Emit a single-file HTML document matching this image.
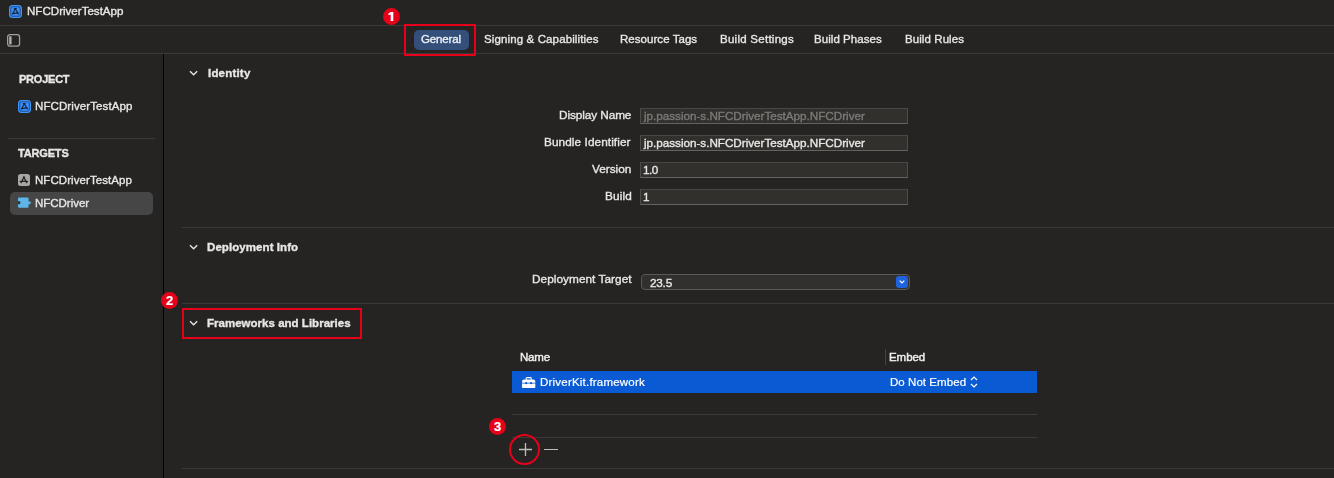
<!DOCTYPE html>
<html><head><meta charset="utf-8">
<style>
*{margin:0;padding:0;box-sizing:border-box}
html,body{width:1334px;height:478px;overflow:hidden;background:#252422}
body{position:relative;font-family:"Liberation Sans",sans-serif;color:#dedddc}
.a{position:absolute;white-space:nowrap;line-height:1;-webkit-text-stroke:0.35px currentColor;will-change:transform}
.hl{position:absolute;height:1px;background:#3b3a38}
.badge{position:absolute;width:17px;height:17px;border-radius:50%;background:#e6001a;color:#fff;font-weight:bold;font-size:13px;line-height:17px;text-align:center;-webkit-text-stroke:0.2px #fff}
.redbox{position:absolute;border:2px solid #e6001a}
.field{position:absolute;left:640px;width:268px;height:16px;background:#31302d;border:1px solid #4d4c49;border-top-color:#484744;border-bottom-color:#64635f}
</style></head><body>
<svg class="a" style="left:9px;top:5px" width="13" height="13" viewBox="0 0 13 13"><rect x="0.5" y="0.5" width="12" height="12" rx="2.6" fill="#3a8ef4" stroke="#4196fa" stroke-width="1"/>
<rect x="1.75" y="1.75" width="9.5" height="9.5" rx="1.3" fill="none" stroke="#184a90" stroke-width="0.9"/>
<path d="M5.3 3.6 L7.3 3.6 M6.3 3.7 L3.5 9.1 M6.3 3.7 L9.3 9.1 M3.4 8.6 L9.2 7.9" stroke="#17253b" stroke-width="1.1" fill="none" stroke-linecap="round"/></svg>
<div class="hl" style="left:0;top:25px;width:1334px"></div>
<svg class="a" style="left:7px;top:34px" width="14" height="13" viewBox="0 0 14 13">
<rect x="0.65" y="0.65" width="11.9" height="11.5" rx="2.3" fill="none" stroke="#a09f9e" stroke-width="1.3"/>
<rect x="2.2" y="2.2" width="2.4" height="8.4" rx="0.7" fill="#b0afae"/></svg>
<div class="a" style="left:414px;top:30px;width:55px;height:20px;border-radius:5px;background:#34507a"></div>
<div class="hl" style="left:0;top:53px;width:1334px"></div>
<div class="a" style="left:163px;top:54px;width:1px;height:424px;background:#000"></div>
<svg class="a" style="left:18px;top:100px" width="13" height="13" viewBox="0 0 13 13"><rect x="0.5" y="0.5" width="12" height="12" rx="2.6" fill="#3a8ef4" stroke="#4196fa" stroke-width="1"/>
<rect x="1.75" y="1.75" width="9.5" height="9.5" rx="1.3" fill="none" stroke="#184a90" stroke-width="0.9"/>
<path d="M5.3 3.6 L7.3 3.6 M6.3 3.7 L3.5 9.1 M6.3 3.7 L9.3 9.1 M3.4 8.6 L9.2 7.9" stroke="#17253b" stroke-width="1.1" fill="none" stroke-linecap="round"/></svg>
<div class="hl" style="left:8px;top:138px;width:147px"></div>
<svg class="a" style="left:18px;top:174px" width="12" height="12" viewBox="0 0 12 12">
<rect x="0" y="0" width="12" height="12" rx="2.5" fill="#a7a6a5"/>
<path d="M5.9 3.2 L3.1 8.6 M5.9 3.2 L8.7 8.6 M2.3 7.4 L9.5 7.4" stroke="#262524" stroke-width="1.3" fill="none" stroke-linecap="round"/><circle cx="5.9" cy="3.2" r="0.9" fill="#262524"/></svg>
<div class="a" style="left:10px;top:192px;width:143px;height:23px;border-radius:5px;background:#464646"></div>
<svg class="a" style="left:18px;top:197px" width="13" height="12" viewBox="0 0 13 12">
<rect x="0" y="0.6" width="10.6" height="10.2" rx="1" fill="#5db5e8"/>
<circle cx="11.3" cy="5.7" r="1.5" fill="#5db5e8"/>
<circle cx="0.9" cy="5.7" r="1.6" fill="#343638"/></svg>
<svg class="a" style="left:189px;top:70px" width="10" height="7" viewBox="0 0 10 7"><path d="M1 1.2 L4.6 4.8 L8.2 1.2" stroke="#e6e5e4" stroke-width="1.4" fill="none"/></svg>
<div class="field" style="top:108px"></div>
<div class="field" style="top:135px"></div>
<div class="field" style="top:162px"></div>
<div class="field" style="top:189px"></div>
<div class="hl" style="left:182px;top:227px;width:1152px"></div>
<svg class="a" style="left:189px;top:244px" width="10" height="7" viewBox="0 0 10 7"><path d="M1 1.2 L4.6 4.8 L8.2 1.2" stroke="#e6e5e4" stroke-width="1.4" fill="none"/></svg>
<div class="a" style="left:641px;top:274px;width:269px;height:16px;border-radius:4px;background:#32302e;border:1px solid #5a5957"></div>
<div class="a" style="left:896px;top:276px;width:12px;height:12px;border-radius:3px;background:#1d63dd"></div>
<svg class="a" style="left:899px;top:280px" width="6" height="4" viewBox="0 0 6 4"><path d="M0.7 0.7 L3 3 L5.3 0.7" stroke="#fff" stroke-width="1.2" fill="none"/></svg>
<div class="hl" style="left:182px;top:303px;width:1152px"></div>
<svg class="a" style="left:189px;top:320px" width="10" height="7" viewBox="0 0 10 7"><path d="M1 1.2 L4.6 4.8 L8.2 1.2" stroke="#e6e5e4" stroke-width="1.4" fill="none"/></svg>
<div class="a" style="left:885px;top:349px;width:1px;height:16px;background:#444341"></div>
<div class="a" style="left:512px;top:371px;width:525px;height:22px;background:#0a5ad4"></div>
<svg class="a" style="left:522px;top:377px" width="14" height="12" viewBox="0 0 14 12">
<path d="M4.2 2.8 L4.2 1.3 Q4.2 0.6 4.9 0.6 L8.5 0.6 Q9.2 0.6 9.2 1.3 L9.2 2.8" stroke="#fff" stroke-width="1.1" fill="none"/>
<path d="M0 5.8 L0 4.4 Q0 2.4 2 2.4 L11.3 2.4 Q13.3 2.4 13.3 4.4 L13.3 5.8 Z" fill="#fff"/>
<path d="M0 6.6 L13.3 6.6 L13.3 10.2 Q13.3 11 12.5 11 L0.8 11 Q0 11 0 10.2 Z" fill="#fff"/>
<circle cx="4.2" cy="6.2" r="1.1" fill="#0a5ad4"/><circle cx="9.1" cy="6.2" r="1.1" fill="#0a5ad4"/></svg>
<svg class="a" style="left:970px;top:376px" width="8" height="12" viewBox="0 0 8 12"><path d="M1 4 L4 1 L7 4 M1 8 L4 11 L7 8" stroke="#fff" stroke-width="1.2" fill="none"/></svg>
<div class="hl" style="left:512px;top:414px;width:525px"></div>
<div class="hl" style="left:512px;top:437px;width:525px"></div>
<svg class="a" style="left:518px;top:442px" width="15" height="15" viewBox="0 0 15 15"><path d="M7.5 1 L7.5 14 M1 7.5 L14 7.5" stroke="#bdbcbb" stroke-width="1.3"/></svg>
<div class="a" style="left:544px;top:449px;width:13.5px;height:1.2px;background:#bdbcbb"></div>
<div class="hl" style="left:182px;top:468px;width:1152px"></div>
<div id="title" class="a" style="left:26.60px;top:5.4px;font-size:11.6px;font-weight:normal;color:#e8e7e6;letter-spacing:-0.013px">NFCDriverTestApp</div>
<div id="tab1" class="a" style="left:420.90px;top:34.2px;font-size:11.5px;font-weight:normal;color:#eef0f4;letter-spacing:-0.133px">General</div>
<div id="tab2" class="a" style="left:484.10px;top:34.2px;font-size:11.5px;font-weight:normal;color:#e8e7e6;letter-spacing:0.124px">Signing &amp; Capabilities</div>
<div id="tab3" class="a" style="left:620.30px;top:34.2px;font-size:11.5px;font-weight:normal;color:#e8e7e6;letter-spacing:0.050px">Resource Tags</div>
<div id="tab4" class="a" style="left:719.50px;top:34.2px;font-size:11.5px;font-weight:normal;color:#e8e7e6;letter-spacing:0.261px">Build Settings</div>
<div id="tab5" class="a" style="left:814.30px;top:34.2px;font-size:11.5px;font-weight:normal;color:#e8e7e6;letter-spacing:0.055px">Build Phases</div>
<div id="tab6" class="a" style="left:904.50px;top:34.2px;font-size:11.5px;font-weight:normal;color:#e8e7e6;letter-spacing:0.080px">Build Rules</div>
<div id="proj" class="a" style="left:19.20px;top:73.9px;font-size:11px;font-weight:bold;color:#e8e7e6;letter-spacing:-0.233px">PROJECT</div>
<div id="sb1" class="a" style="left:34.90px;top:101.0px;font-size:11.5px;font-weight:normal;color:#e8e7e6;letter-spacing:0.107px">NFCDriverTestApp</div>
<div id="targ" class="a" style="left:18.30px;top:148.2px;font-size:11px;font-weight:bold;color:#e8e7e6;letter-spacing:-0.166px">TARGETS</div>
<div id="sb2" class="a" style="left:34.90px;top:174.8px;font-size:11.5px;font-weight:normal;color:#e8e7e6;letter-spacing:0.066px">NFCDriverTestApp</div>
<div id="sb3" class="a" style="left:34.90px;top:198.2px;font-size:11.5px;font-weight:normal;color:#e8e7e6;letter-spacing:-0.025px">NFCDriver</div>
<div id="h1" class="a" style="left:207.50px;top:68.3px;font-size:11.5px;font-weight:bold;color:#e8e7e6;letter-spacing:0.200px">Identity</div>
<div id="h2" class="a" style="left:207.30px;top:242.0px;font-size:11.5px;font-weight:bold;color:#e8e7e6;letter-spacing:0.072px">Deployment Info</div>
<div id="h3" class="a" style="left:207.30px;top:317.8px;font-size:11.5px;font-weight:bold;color:#e8e7e6;letter-spacing:0.017px">Frameworks and Libraries</div>
<div id="l1" class="a" style="left:559.00px;top:110.1px;font-size:11.8px;font-weight:normal;color:#e8e7e6;letter-spacing:-0.091px">Display Name</div>
<div id="l2" class="a" style="left:543.80px;top:137.1px;font-size:11.8px;font-weight:normal;color:#e8e7e6;letter-spacing:0.075px">Bundle Identifier</div>
<div id="l3" class="a" style="left:591.70px;top:164.1px;font-size:11.8px;font-weight:normal;color:#e8e7e6;letter-spacing:0.000px">Version</div>
<div id="l4" class="a" style="left:604.50px;top:191.1px;font-size:11.8px;font-weight:normal;color:#e8e7e6;letter-spacing:0.150px">Build</div>
<div id="l5" class="a" style="left:531.60px;top:274.3px;font-size:11.8px;font-weight:normal;color:#e8e7e6;letter-spacing:0.050px">Deployment Target</div>
<div id="f1" class="a" style="left:643.70px;top:110.1px;font-size:11.7px;font-weight:normal;color:#7b7a78;letter-spacing:-0.016px">jp.passion-s.NFCDriverTestApp.NFCDriver</div>
<div id="f2" class="a" style="left:643.70px;top:137.1px;font-size:11.7px;font-weight:normal;color:#e8e7e6;letter-spacing:-0.016px">jp.passion-s.NFCDriverTestApp.NFCDriver</div>
<div id="f3" class="a" style="left:642.50px;top:164.1px;font-size:11.7px;font-weight:normal;color:#e8e7e6;letter-spacing:-0.500px">1.0</div>
<div id="f4" class="a" style="left:642.50px;top:191.1px;font-size:11.7px;font-weight:normal;color:#e8e7e6;letter-spacing:0.000px">1</div>
<div id="pop" class="a" style="left:649.70px;top:276.5px;font-size:11.7px;font-weight:normal;color:#e8e7e6;letter-spacing:-0.200px">23.5</div>
<div id="th1" class="a" style="left:519.70px;top:351.6px;font-size:11.5px;font-weight:normal;color:#eeeeee;letter-spacing:-0.200px;-webkit-text-stroke-width:0.45px">Name</div>
<div id="th2" class="a" style="left:888.70px;top:351.6px;font-size:11.5px;font-weight:normal;color:#eeeeee;letter-spacing:-0.050px;-webkit-text-stroke-width:0.45px">Embed</div>
<div id="r1" class="a" style="left:539.70px;top:377.0px;font-size:11.5px;font-weight:normal;color:#ffffff;letter-spacing:0.211px;-webkit-text-stroke-width:0.2px">DriverKit.framework</div>
<div id="r2" class="a" style="left:890.10px;top:377.0px;font-size:11.5px;font-weight:normal;color:#ffffff;letter-spacing:0.055px;-webkit-text-stroke-width:0.2px">Do Not Embed</div>
<div class="redbox" style="left:404px;top:24px;width:72px;height:32px"></div>
<svg class="a" style="left:383px;top:8px" width="17" height="17" viewBox="0 0 17 17"><circle cx="8.5" cy="8.5" r="8.5" fill="#e6001a"/><path d="M7.7 4 L10.3 4 L10.3 12.9 L7.7 12.9 L7.7 6.4 L5.4 7.3 L5.4 5.6 Z" fill="#fff"/></svg>
<div class="redbox" style="left:181.5px;top:308px;width:180px;height:31px"></div>
<div class="badge" style="left:161px;top:292px">2</div>
<div class="a" style="left:509px;top:434px;width:31px;height:31px;border-radius:50%;border:2px solid #e6001a"></div>
<div class="badge" style="left:489px;top:418px">3</div>
</body></html>
